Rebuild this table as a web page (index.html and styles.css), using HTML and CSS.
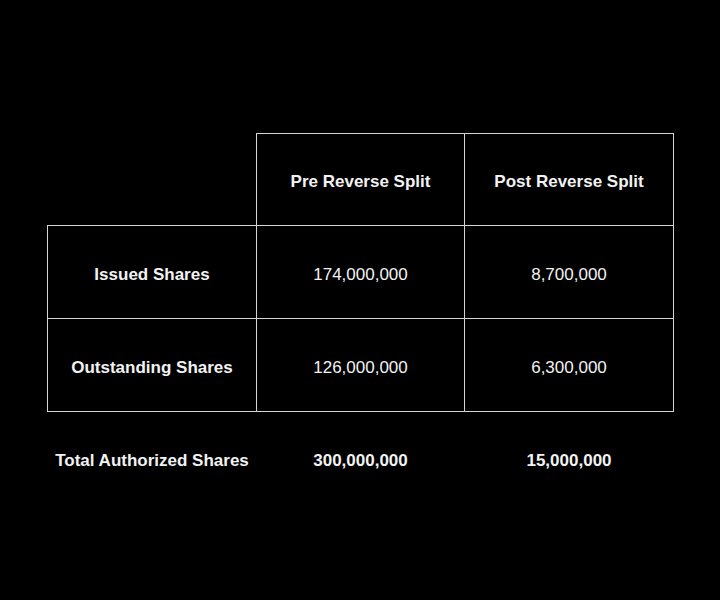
FILE: index.html
```html
<!DOCTYPE html>
<html lang="en">
<head>
<meta charset="utf-8">
<title>Reverse Split</title>
<link rel="stylesheet" href="styles.css">
</head>
<body>
<main class="page">
  <table class="shares">
    <colgroup>
      <col class="c1"><col class="c2"><col class="c3">
    </colgroup>
    <thead>
      <tr class="head">
        <th class="blank"></th>
        <th class="cell">Pre Reverse Split</th>
        <th class="cell">Post Reverse Split</th>
      </tr>
    </thead>
    <tbody>
      <tr class="row">
        <th class="cell">Issued Shares</th>
        <td class="cell">174,000,000</td>
        <td class="cell">8,700,000</td>
      </tr>
      <tr class="row">
        <th class="cell">Outstanding Shares</th>
        <td class="cell">126,000,000</td>
        <td class="cell">6,300,000</td>
      </tr>
    </tbody>
    <tfoot>
      <tr class="total">
        <th>Total Authorized Shares</th>
        <td>300,000,000</td>
        <td>15,000,000</td>
      </tr>
    </tfoot>
  </table>
</main>
</body>
</html>
```

FILE: styles.css
```css
html, body {
  margin: 0;
  background: #000;
}
.page {
  padding: 133px 0 0 47px;
  font-family: "Liberation Sans", Arial, sans-serif;
  font-size: 17px;
  color: #f2f2f2;
}
.shares {
  border-collapse: collapse;
  table-layout: fixed;
  width: 627px;
}
.c1 { width: 209px; }
.c2 { width: 208px; }
.c3 { width: 209px; }
.shares th, .shares td {
  padding: 5px 0 0;
  text-align: center;
  vertical-align: middle;
}
.shares th { font-weight: bold; }
.shares td { font-weight: normal; }
.cell {
  border: 1px solid #d4d4d4;
}
.head { height: 92px; }
.row { height: 93px; }
.total { height: 94px; }
.total th, .total td { font-weight: bold; }
.blank { border: none; }
```
